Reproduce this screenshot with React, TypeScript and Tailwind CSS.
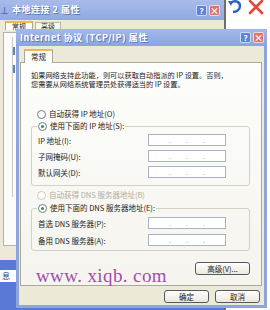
import React from "react";

const cjk = "font-['SimSun','Noto_Sans_CJK_SC',sans-serif]";

const Radio = ({ checked, disabled, label }: { checked?: boolean; disabled?: boolean; label: string }) => (
  <div className={`flex items-center gap-[3px] h-[10px] ${disabled ? "text-[#b0ada0]" : "text-[#222]"}`}>
    <span
      className={`w-[9px] h-[9px] rounded-full border flex items-center justify-center bg-white ${
        disabled ? "border-[#ccc9bc]" : "border-[#6d7e96]"
      }`}
    >
      {checked && <span className="w-[3px] h-[3px] rounded-full bg-[#3f8a3c]" />}
    </span>
    <span className="leading-[10px]">{label}</span>
  </div>
);

const IpBox = () => (
  <div className="w-[78px] h-[12px] border border-[#a9b3bf] bg-white flex items-center justify-between px-[20px] text-[7px] leading-none text-[#9a9a9a]">
    <span>.</span>
    <span>.</span>
    <span>.</span>
  </div>
);

const Row = ({ label }: { label: string }) => (
  <div className="flex items-center h-[12px]">
    <span className="w-[110px] text-[#222]">{label}</span>
    <IpBox />
  </div>
);

const XpButton = ({ label, w }: { label: string; w: string }) => (
  <div
    className={`${w} h-[13px] rounded-[3px] border border-[#55585e] bg-gradient-to-b from-white to-[#ebe8dc] flex items-center justify-center text-[#222] text-[7.5px]`}
  >
    {label}
  </div>
);

const CaptionButtons = () => (
  <div className="flex gap-[2px]">
    <div className="w-[11px] h-[11px] rounded-[2px] border border-white/70 bg-[#5d84dc] text-white text-[8px] font-bold leading-[10px] text-center">
      ?
    </div>
    <div className="w-[11px] h-[11px] rounded-[2px] border border-white/70 bg-[#dc7470] text-white text-[9px] font-bold leading-[10px] text-center">
      ×
    </div>
  </div>
);

export default function App() {
  return (
    <div className={`relative w-[270px] h-[310px] overflow-hidden bg-white ${cjk} text-[7.5px]`}>
      {/* background window */}
      <div className="absolute left-0 top-0 w-[226px] h-[310px] flex flex-col border-r-2 border-[#6d6d70]">
        <div className="h-[20px] bg-gradient-to-b from-[#a8bbea] to-[#91a9e2] flex items-center pr-[4px]">
          <span className="w-[10px] text-[#37508f] text-[9px] leading-none">⊥</span>
          <span className="ml-[2px] text-white text-[9px] font-bold tracking-[0.5px] [text-shadow:1px_1px_0_#5f78b8]">
            本地连接 2 属性
          </span>
          <div className="ml-auto">
            <CaptionButtons />
          </div>
        </div>
        <div className="flex-1 bg-[#ece9d8] flex flex-col">
          <div className="flex items-start pl-[5px] pt-[1px] h-[12px]">
            <div className="w-[28px] h-[9px] bg-white border border-b-0 border-[#a8a898] border-t-2 border-t-[#f4b64c] flex items-center justify-center text-[#222] text-[7px] leading-none">
              常规
            </div>
            <div className="w-[26px] h-[8px] mt-[1px] ml-[2px] bg-[#f6f5ef] border border-b-0 border-[#b8b8a8] flex items-center justify-center text-[#333] text-[7px] leading-none">
              高级
            </div>
          </div>
          <div className="ml-[3px] mr-[3px] h-[214px] bg-[#fbfbf9] border border-[#b3b3a6]">
            <div className="ml-[8px] mt-[4px] h-[160px] w-[2px] border-l border-[#c9c8bd]" />
            <div className="ml-[9px] -mt-[150px] w-[2px] h-[8px] bg-[#5f7fbf]" />
            <div className="ml-[9px] mt-[10px] w-[2px] h-[8px] bg-[#5f7fbf]" />
          </div>
          <div className="h-[14px]" />
          <div className="flex-1 bg-[#5a78d6] pt-[10px]">
            <div className="w-[16px] h-[12px] bg-white text-[#2b3f7a] flex items-center pl-[2px] text-[8px]">息</div>
          </div>
        </div>
      </div>

      {/* toolbar icons at right */}
      <div className="absolute left-[228px] top-0 flex items-start gap-[6px]">
        <svg width="14" height="14" viewBox="0 0 14 14">
          <path d="M3 3 C6 0 12 1 12 6 C12 10 8 12 5 12" fill="none" stroke="#2f5fc8" strokeWidth="2.4" />
          <path d="M0 1 L5 1 L3 6 Z" fill="#2f5fc8" />
        </svg>
        <svg width="16" height="15" viewBox="0 0 16 15">
          <path d="M2 1 L14 13 M14 1 L2 13" stroke="#e2463c" strokeWidth="2.6" strokeLinecap="round" />
        </svg>
      </div>

      {/* front dialog */}
      <div className="absolute left-[16px] top-[29px] w-[251px] h-[279px] flex flex-col border-x-[3px] border-b-[3px] border-[#8ea5da] bg-[#ece9d8]">
        <div className="-mx-[3px] h-[17px] bg-gradient-to-b from-[#a3b8ea] to-[#8ba4e0] flex items-center pl-[4px] pr-[3px]">
          <span className="text-white text-[9px] font-bold tracking-[0.6px] [text-shadow:1px_1px_0_#6078b8]">
            Internet 协议 (TCP/IP) 属性
          </span>
          <div className="ml-auto">
            <CaptionButtons />
          </div>
        </div>

        <div className="flex flex-col px-[1px]">
          <div className="pl-[4px] pt-[3px] h-[16px] flex items-end">
            <div className="relative z-10 w-[29px] h-[14px] -mb-[1px] bg-[#fcfcfa] border border-b-0 border-[#a8a898] border-t-2 border-t-[#f4b64c] flex items-center justify-center text-[#222]">
              常规
            </div>
          </div>
          <div className="relative w-[242px] h-[224px] bg-gradient-to-b from-[#fdfdfb] to-[#f5f4ee] border border-[#a9a99c] flex flex-col pl-[10px] pr-[11px] text-[#222]">
            <p className="mt-[8px] text-[7.2px] leading-[8.6px] whitespace-nowrap">
              如果网络支持此功能，则可以获取自动指派的 IP 设置。否则，
              <br />
              您需要从网络系统管理员处获得适当的 IP 设置。
            </p>

            <div className="mt-[21px] pl-[6px]">
              <Radio label="自动获得 IP 地址(O)" />
            </div>

            <fieldset className="mt-[2px] border border-[#d3d1c3] rounded-[3px] pl-[6px] pr-[2px] pb-[7px]">
              <legend className="ml-[-1px] px-[1px]">
                <Radio checked label="使用下面的 IP 地址(S):" />
              </legend>
              <div className="flex flex-col gap-[4px] pt-[3px]">
                <Row label="IP 地址(I):" />
                <Row label="子网掩码(U):" />
                <Row label="默认网关(D):" />
              </div>
            </fieldset>

            <div className="mt-[4px] pl-[6px]">
              <Radio disabled label="自动获得 DNS 服务器地址(B)" />
            </div>

            <fieldset className="mt-[3px] border border-[#d3d1c3] rounded-[3px] pl-[6px] pr-[2px] pb-[4px]">
              <legend className="ml-[-1px] px-[1px]">
                <Radio checked label="使用下面的 DNS 服务器地址(E):" />
              </legend>
              <div className="flex flex-col gap-[5px] pt-[4px]">
                <Row label="首选 DNS 服务器(P):" />
                <Row label="备用 DNS 服务器(A):" />
              </div>
            </fieldset>

            <div className="mt-[11px] flex justify-end">
              <XpButton label="高级(V)..." w="w-[55px]" />
            </div>

            <span className="absolute left-[15px] top-[203px] font-['Liberation_Serif',serif] text-[19px] leading-none text-[#a24db0] tracking-[0.4px]">
              www. xiqb. com
            </span>
          </div>
          <div className="mt-[4px] flex justify-end gap-[6px] pr-[3px]">
            <XpButton label="确定" w="w-[45px]" />
            <XpButton label="取消" w="w-[45px]" />
          </div>
        </div>
      </div>
    </div>
  );
}
